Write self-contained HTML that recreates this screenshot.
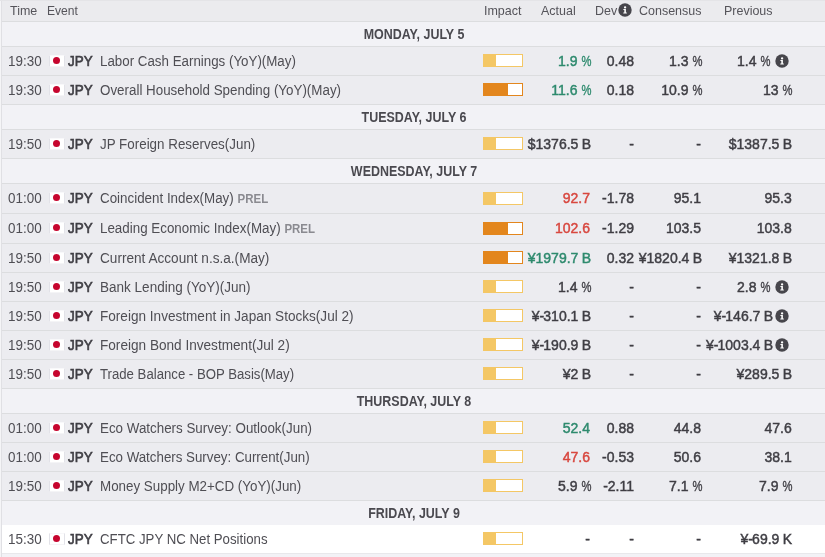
<!DOCTYPE html>
<html><head><meta charset="utf-8"><style>
*{margin:0;padding:0;box-sizing:border-box}
html,body{width:825px;height:557px;overflow:hidden;background:#ececf0;font-family:"Liberation Sans",sans-serif;color:#4f4e54}
.r{position:absolute;left:0;width:825px;border-bottom:1px solid #dcdddf}
.c{position:absolute;white-space:nowrap;line-height:16px}
.hdr{top:0;height:22px;background:#ebebee;font-size:13px;color:#55545a}
.hdr .c{transform:scaleX(0.96);transform-origin:0 50%}
.day{background:#f2f2f6;font-weight:bold;font-size:14px;color:#4a494f}
.day .c{left:3px;right:0;text-align:center;transform:scaleX(0.89)}
.row{font-size:14px}
.tm{left:8.4px;transform:scaleX(0.96);transform-origin:0 50%}
.flag{position:absolute;left:49px;width:16px;height:12px;background:#fff;border-left:1px solid #e2e2e8;border-right:1px solid #e2e2e8;border-top:1px solid #f8f8fa;border-bottom:1px solid #f4f4f6}
.flag b{position:absolute;left:3px;top:1px;width:7px;height:7px;border-radius:50%;background:#c6052e}
.cur{left:68px;font-weight:normal;-webkit-text-stroke:0.6px currentColor;color:#3f3e44;transform:scaleX(0.96);transform-origin:0 50%}
.ev{left:100px;transform:scaleX(0.955);transform-origin:0 50%}
.prel{font-weight:bold;font-size:12px;color:#8a8a90;margin-left:4px}
.imp{position:absolute;left:483px;width:40px;height:13px;background:#fff}
.num{color:#3f3e44;-webkit-text-stroke:0.45px currentColor;text-align:right}
.num.dg{padding-right:1px}
.num u{text-decoration:none;letter-spacing:-0.6px}
.num u.y{letter-spacing:0}
.num u.h{letter-spacing:-0.9px}
.num i{font-style:normal;-webkit-text-stroke:0.35px currentColor;display:inline-block;transform:scaleX(0.8);transform-origin:100% 50%;margin-left:1px}
.act{right:234px}
.dev{right:190px}
.con{right:123px}
.prv{right:33px}
.prv.dg{padding-right:0.3px}
.prvi{right:55px}
.prvb{right:52px}
.ic{position:absolute;left:775px;width:14px;height:14px}
.g{color:#2e8a6e}
.rd{color:#d8473f}
.lb{position:absolute;left:1px;top:0;width:1px;height:557px;background:#e0e0e4}
.lb0{position:absolute;left:0;top:0;width:1px;height:557px;background:#f5f5f7}
</style></head><body style="will-change:transform">
<div class="r hdr">
<span class="c" style="left:10px;top:3px">Time</span>
<span class="c" style="left:46.5px;top:3px;transform:scaleX(0.93)">Event</span>
<span class="c" style="left:484px;top:3px">Impact</span>
<span class="c" style="left:541px;top:3px">Actual</span>
<span class="c" style="left:595px;top:3px">Dev</span>
<span class="ic" style="left:618px;top:3px"><svg width="14" height="14" viewBox="0 0 14 14"><circle cx="7" cy="7" r="6.7" fill="#47464c"/><circle cx="7.1" cy="4.4" r="1.15" fill="#fff"/><path d="M5.4 6H7.9V9.4H8.8V10.6H5.3V9.4H6.3V7H5.4Z" fill="#fff"/></svg></span>
<span class="c" style="left:639px;top:3px">Consensus</span>
<span class="c" style="left:724px;top:3px">Previous</span>
</div>

<div class="r day" style="top:22px;height:25px"><span class="c" style="top:4px">MONDAY, JULY 5</span></div>
<div class="r row" style="top:47px;height:29px"><span class="c tm" style="top:6px">19:30</span><span class="flag" style="top:8px"><b></b></span><span class="c cur" style="top:6px">JPY</span><span class="c ev" style="top:6px;transform:scaleX(0.9524)">Labor Cash Earnings (YoY)(May)</span><span class="imp" style="top:7px;border:1px solid #f4c765"><span style="position:absolute;left:0;top:0;bottom:0;width:12px;background:#f4c765"></span></span><span class="c num act g" style="top:6px">1.9<i>%</i></span><span class="c num dev dg" style="top:6px">0.48</span><span class="c num con" style="top:6px">1.3<i>%</i></span><span class="c num prvi" style="top:6px">1.4<i>%</i></span><span class="ic" style="top:7px"><svg width="14" height="14" viewBox="0 0 14 14"><circle cx="7" cy="7" r="6.7" fill="#47464c"/><circle cx="7.1" cy="4.4" r="1.15" fill="#fff"/><path d="M5.4 6H7.9V9.4H8.8V10.6H5.3V9.4H6.3V7H5.4Z" fill="#fff"/></svg></span></div>
<div class="r row" style="top:76px;height:29px"><span class="c tm" style="top:6px">19:30</span><span class="flag" style="top:8px"><b></b></span><span class="c cur" style="top:6px">JPY</span><span class="c ev" style="top:6px;transform:scaleX(0.9550)">Overall Household Spending (YoY)(May)</span><span class="imp" style="top:7px;border:1px solid #e3861d"><span style="position:absolute;left:0;top:0;bottom:0;width:24px;background:#e3861d"></span></span><span class="c num act g" style="top:6px">11.6<i>%</i></span><span class="c num dev dg" style="top:6px">0.18</span><span class="c num con" style="top:6px">10.9<i>%</i></span><span class="c num prv" style="top:6px">13<i>%</i></span></div>
<div class="r day" style="top:105px;height:25px"><span class="c" style="top:4px">TUESDAY, JULY 6</span></div>
<div class="r row" style="top:130px;height:29px"><span class="c tm" style="top:6px">19:50</span><span class="flag" style="top:8px"><b></b></span><span class="c cur" style="top:6px">JPY</span><span class="c ev" style="top:6px;transform:scaleX(0.9565)">JP Foreign Reserves(Jun)</span><span class="imp" style="top:7px;border:1px solid #f4c765"><span style="position:absolute;left:0;top:0;bottom:0;width:12px;background:#f4c765"></span></span><span class="c num act" style="top:6px">$1376.5<u> </u>B</span><span class="c num dev dg" style="top:6px">-</span><span class="c num con dg" style="top:6px">-</span><span class="c num prv" style="top:6px">$1387.5<u> </u>B</span></div>
<div class="r day" style="top:159px;height:25px"><span class="c" style="top:4px">WEDNESDAY, JULY 7</span></div>
<div class="r row" style="top:184px;height:30px"><span class="c tm" style="top:6px">01:00</span><span class="flag" style="top:8px"><b></b></span><span class="c cur" style="top:6px">JPY</span><span class="c ev" style="top:6px;transform:scaleX(0.9550)">Coincident Index(May)<span class="prel">PREL</span></span><span class="imp" style="top:8px;border:1px solid #f4c765"><span style="position:absolute;left:0;top:0;bottom:0;width:12px;background:#f4c765"></span></span><span class="c num act rd dg" style="top:6px">92.7</span><span class="c num dev dg" style="top:6px">-1.78</span><span class="c num con dg" style="top:6px">95.1</span><span class="c num prv dg" style="top:6px">95.3</span></div>
<div class="r row" style="top:214px;height:30px"><span class="c tm" style="top:6px">01:00</span><span class="flag" style="top:8px"><b></b></span><span class="c cur" style="top:6px">JPY</span><span class="c ev" style="top:6px;transform:scaleX(0.9550)">Leading Economic Index(May)<span class="prel">PREL</span></span><span class="imp" style="top:8px;border:1px solid #e3861d"><span style="position:absolute;left:0;top:0;bottom:0;width:24px;background:#e3861d"></span></span><span class="c num act rd dg" style="top:6px">102.6</span><span class="c num dev dg" style="top:6px">-1.29</span><span class="c num con dg" style="top:6px">103.5</span><span class="c num prv dg" style="top:6px">103.8</span></div>
<div class="r row" style="top:244px;height:29px"><span class="c tm" style="top:6px">19:50</span><span class="flag" style="top:8px"><b></b></span><span class="c cur" style="top:6px">JPY</span><span class="c ev" style="top:6px;transform:scaleX(0.9718)">Current Account n.s.a.(May)</span><span class="imp" style="top:7px;border:1px solid #e3861d"><span style="position:absolute;left:0;top:0;bottom:0;width:24px;background:#e3861d"></span></span><span class="c num act g" style="top:6px"><u class=y>¥</u>1979.7<u> </u>B</span><span class="c num dev dg" style="top:6px">0.32</span><span class="c num con" style="top:6px"><u class=y>¥</u>1820.4<u> </u>B</span><span class="c num prv" style="top:6px"><u class=y>¥</u>1321.8<u> </u>B</span></div>
<div class="r row" style="top:273px;height:29px"><span class="c tm" style="top:6px">19:50</span><span class="flag" style="top:8px"><b></b></span><span class="c cur" style="top:6px">JPY</span><span class="c ev" style="top:6px;transform:scaleX(0.9661)">Bank Lending (YoY)(Jun)</span><span class="imp" style="top:7px;border:1px solid #f4c765"><span style="position:absolute;left:0;top:0;bottom:0;width:12px;background:#f4c765"></span></span><span class="c num act" style="top:6px">1.4<i>%</i></span><span class="c num dev dg" style="top:6px">-</span><span class="c num con dg" style="top:6px">-</span><span class="c num prvi" style="top:6px">2.8<i>%</i></span><span class="ic" style="top:7px"><svg width="14" height="14" viewBox="0 0 14 14"><circle cx="7" cy="7" r="6.7" fill="#47464c"/><circle cx="7.1" cy="4.4" r="1.15" fill="#fff"/><path d="M5.4 6H7.9V9.4H8.8V10.6H5.3V9.4H6.3V7H5.4Z" fill="#fff"/></svg></span></div>
<div class="r row" style="top:302px;height:29px"><span class="c tm" style="top:6px">19:50</span><span class="flag" style="top:8px"><b></b></span><span class="c cur" style="top:6px">JPY</span><span class="c ev" style="top:6px;transform:scaleX(0.9698)">Foreign Investment in Japan Stocks(Jul 2)</span><span class="imp" style="top:7px;border:1px solid #f4c765"><span style="position:absolute;left:0;top:0;bottom:0;width:12px;background:#f4c765"></span></span><span class="c num act" style="top:6px"><u class=y>¥</u><u class=h>-</u>310.1<u> </u>B</span><span class="c num dev dg" style="top:6px">-</span><span class="c num con dg" style="top:6px">-</span><span class="c num prvb" style="top:6px"><u class=y>¥</u><u class=h>-</u>146.7<u> </u>B</span><span class="ic" style="top:7px"><svg width="14" height="14" viewBox="0 0 14 14"><circle cx="7" cy="7" r="6.7" fill="#47464c"/><circle cx="7.1" cy="4.4" r="1.15" fill="#fff"/><path d="M5.4 6H7.9V9.4H8.8V10.6H5.3V9.4H6.3V7H5.4Z" fill="#fff"/></svg></span></div>
<div class="r row" style="top:331px;height:29px"><span class="c tm" style="top:6px">19:50</span><span class="flag" style="top:8px"><b></b></span><span class="c cur" style="top:6px">JPY</span><span class="c ev" style="top:6px;transform:scaleX(0.9712)">Foreign Bond Investment(Jul 2)</span><span class="imp" style="top:7px;border:1px solid #f4c765"><span style="position:absolute;left:0;top:0;bottom:0;width:12px;background:#f4c765"></span></span><span class="c num act" style="top:6px"><u class=y>¥</u><u class=h>-</u>190.9<u> </u>B</span><span class="c num dev dg" style="top:6px">-</span><span class="c num con dg" style="top:6px">-</span><span class="c num prvb" style="top:6px"><u class=y>¥</u><u class=h>-</u>1003.4<u> </u>B</span><span class="ic" style="top:7px"><svg width="14" height="14" viewBox="0 0 14 14"><circle cx="7" cy="7" r="6.7" fill="#47464c"/><circle cx="7.1" cy="4.4" r="1.15" fill="#fff"/><path d="M5.4 6H7.9V9.4H8.8V10.6H5.3V9.4H6.3V7H5.4Z" fill="#fff"/></svg></span></div>
<div class="r row" style="top:360px;height:29px"><span class="c tm" style="top:6px">19:50</span><span class="flag" style="top:8px"><b></b></span><span class="c cur" style="top:6px">JPY</span><span class="c ev" style="top:6px;transform:scaleX(0.9412)">Trade Balance - BOP Basis(May)</span><span class="imp" style="top:7px;border:1px solid #f4c765"><span style="position:absolute;left:0;top:0;bottom:0;width:12px;background:#f4c765"></span></span><span class="c num act" style="top:6px"><u class=y>¥</u>2<u> </u>B</span><span class="c num dev dg" style="top:6px">-</span><span class="c num con dg" style="top:6px">-</span><span class="c num prv" style="top:6px"><u class=y>¥</u>289.5<u> </u>B</span></div>
<div class="r day" style="top:389px;height:25px"><span class="c" style="top:4px">THURSDAY, JULY 8</span></div>
<div class="r row" style="top:414px;height:29px"><span class="c tm" style="top:6px">01:00</span><span class="flag" style="top:8px"><b></b></span><span class="c cur" style="top:6px">JPY</span><span class="c ev" style="top:6px;transform:scaleX(0.9550)">Eco Watchers Survey: Outlook(Jun)</span><span class="imp" style="top:7px;border:1px solid #f4c765"><span style="position:absolute;left:0;top:0;bottom:0;width:12px;background:#f4c765"></span></span><span class="c num act g dg" style="top:6px">52.4</span><span class="c num dev dg" style="top:6px">0.88</span><span class="c num con dg" style="top:6px">44.8</span><span class="c num prv dg" style="top:6px">47.6</span></div>
<div class="r row" style="top:443px;height:29px"><span class="c tm" style="top:6px">01:00</span><span class="flag" style="top:8px"><b></b></span><span class="c cur" style="top:6px">JPY</span><span class="c ev" style="top:6px;transform:scaleX(0.9510)">Eco Watchers Survey: Current(Jun)</span><span class="imp" style="top:7px;border:1px solid #f4c765"><span style="position:absolute;left:0;top:0;bottom:0;width:12px;background:#f4c765"></span></span><span class="c num act rd dg" style="top:6px">47.6</span><span class="c num dev dg" style="top:6px">-0.53</span><span class="c num con dg" style="top:6px">50.6</span><span class="c num prv dg" style="top:6px">38.1</span></div>
<div class="r row" style="top:472px;height:29px"><span class="c tm" style="top:6px">19:50</span><span class="flag" style="top:8px"><b></b></span><span class="c cur" style="top:6px">JPY</span><span class="c ev" style="top:6px;transform:scaleX(0.9550)">Money Supply M2+CD (YoY)(Jun)</span><span class="imp" style="top:7px;border:1px solid #f4c765"><span style="position:absolute;left:0;top:0;bottom:0;width:12px;background:#f4c765"></span></span><span class="c num act" style="top:6px">5.9<i>%</i></span><span class="c num dev dg" style="top:6px">-2.11</span><span class="c num con" style="top:6px">7.1<i>%</i></span><span class="c num prv" style="top:6px">7.9<i>%</i></span></div>
<div class="r day" style="top:501px;height:25px"><span class="c" style="top:4px">FRIDAY, JULY 9</span></div>
<div class="r row" style="top:525px;height:29px;background:#fff;border-bottom-color:#e8e8eb"><span class="c tm" style="top:6px">15:30</span><span class="flag" style="top:8px"><b></b></span><span class="c cur" style="top:6px">JPY</span><span class="c ev" style="top:6px;transform:scaleX(0.9457)">CFTC JPY NC Net Positions</span><span class="imp" style="top:7px;border:1px solid #f4c765"><span style="position:absolute;left:0;top:0;bottom:0;width:12px;background:#f4c765"></span></span><span class="c num act dg" style="top:6px">-</span><span class="c num dev dg" style="top:6px">-</span><span class="c num con dg" style="top:6px">-</span><span class="c num prv" style="top:6px"><u class=y>¥</u><u class=h>-</u>69.9<u> </u>K</span></div>
<div style="position:absolute;left:0;top:554px;width:825px;height:3px;background:#f2f2f6"></div><div class="lb"></div><div class="lb0"></div><div style="position:absolute;left:0;top:0;width:825px;height:1px;background:#e4e4e7"></div>
</body></html>
